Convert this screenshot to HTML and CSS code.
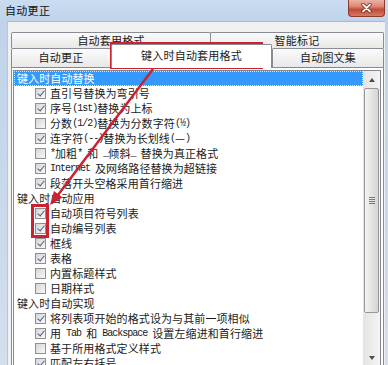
FILE: index.html
```html
<!DOCTYPE html>
<html>
<head>
    <meta charset="UTF-8">
    <title>自动更正</title>
    <link rel="stylesheet" href="styles.css">
</head>
<body>
    <div class="window">
        <div class="titlebar">
            <span class="title">自动更正</span>
            <span class="close">
                <svg width="11" height="10" viewBox="0 0 11 10">
                    <path d="M2 1.5 L9 8.5 M9 1.5 L2 8.5" stroke="#5a1d15" stroke-width="3.2" stroke-linecap="round"/>
                    <path d="M2 1.5 L9 8.5 M9 1.5 L2 8.5" stroke="#ffffff" stroke-width="1.8" stroke-linecap="round"/>
                </svg>
            </span>
        </div>

        <div class="client">
            <div class="tabs">
                <div class="tabrow back">
                    <div class="tab t-fmt">自动套用格式</div>
                    <div class="tab t-smart">智能标记</div>
                </div>
                <div class="tabrow front">
                    <div class="tab t-ac">自动更正</div>
                    <div class="tab active">键入时自动套用格式</div>
                    <div class="tab t-at">自动图文集</div>
                </div>
            </div>

            <div class="pane">
                <div class="listbox">
                    <div class="items">
                        <div class="row head sel">键入时自动替换</div>
                        <div class="row"><span class="cb on"></span>直引号替换为弯引号</div>
                        <div class="row"><span class="cb on"></span>序号<span class="en">(1st)</span>替换为上标</div>
                        <div class="row"><span class="cb"></span>分数<span class="en">(1/2)</span>替换为分数字符<span class="en">(½)</span></div>
                        <div class="row"><span class="cb on"></span>连字符<span class="en">(--)</span>替换为长划线<span class="en">(</span>—<span class="en">)</span></div>
                        <div class="row"><span class="cb"></span><span class="en">*</span>加粗<span class="en">* </span>和<span class="en"> _</span>倾斜<span class="en">_ </span>替换为真正格式</div>
                        <div class="row"><span class="cb on"></span><span class="en">Internet </span>及网络路径替换为超链接</div>
                        <div class="row"><span class="cb on"></span>段落开头空格采用首行缩进</div>
                        <div class="row head">键入时自动应用</div>
                        <div class="row"><span class="cb on"></span>自动项目符号列表</div>
                        <div class="row"><span class="cb on"></span>自动编号列表</div>
                        <div class="row"><span class="cb on"></span>框线</div>
                        <div class="row"><span class="cb on"></span>表格</div>
                        <div class="row"><span class="cb"></span>内置标题样式</div>
                        <div class="row"><span class="cb"></span>日期样式</div>
                        <div class="row head">键入时自动实现</div>
                        <div class="row"><span class="cb on"></span>将列表项开始的格式设为与其前一项相似</div>
                        <div class="row"><span class="cb on"></span>用<span class="en"> Tab </span>和<span class="en"> Backspace </span>设置左缩进和首行缩进</div>
                        <div class="row"><span class="cb"></span>基于所用格式定义样式</div>
                        <div class="row"><span class="cb on"></span>匹配左右括号</div>
                    </div>
                    <div class="scrollbar">
                        <div class="sb-btn"><span class="arrow-up"></span></div>
                        <div class="thumb"><span class="grip"></span></div>
                        <div class="track"></div>
                        <div class="sb-btn"><span class="arrow-down"></span></div>
                    </div>
                </div>
            </div>
        </div>

        <!-- red annotation marks drawn over the dialog -->
        <svg class="annot" width="388" height="365" viewBox="0 0 388 365">
            <rect x="111.5" y="43.5" width="150" height="24" fill="none" stroke="#cc2230" stroke-width="3"/>
            <rect x="32.5" y="205.5" width="15" height="31" fill="none" stroke="#cc2230" stroke-width="3"/>
            <line x1="153" y1="69" x2="58" y2="195" stroke="#cc2230" stroke-width="2.5"/>
            <polygon points="50,205 62.5,197.5 54,191" fill="#cc2230"/>
        </svg>
    </div>
</body>
</html>
```

FILE: styles.css
```css
/* Windows 7 style dialog */
:root {
    --frame: #c4d7ee;
    --client: #f0f0f0;
    --tab-border: #898c95;
    --list-border: #828790;
    --highlight: #3399ff;
    --text: #1a1a1a;
}

* {
    margin: 0;
    padding: 0;
    box-sizing: border-box;
}

body {
    width: 388px;
    height: 365px;
    overflow: hidden;
    font-family: "Noto Sans CJK SC", "Liberation Sans", sans-serif;
    font-size: 11px;
    color: var(--text);
}

.window {
    position: relative;
    width: 388px;
    height: 365px;
    overflow: hidden;
    background: linear-gradient(#cadcf1, #bfd3ea 22px, #d2dfed);
}

.titlebar {
    height: 21px;
    display: flex;
    justify-content: space-between;
}

.title {
    padding: 3px 0 0 5px;
    line-height: 15px;
    letter-spacing: 0.3px;
    color: #111;
}

.close {
    width: 37px;
    height: 17px;
    margin-right: 3px;
    border: 1px solid #8a3a2e;
    border-top: none;
    border-radius: 0 0 4px 4px;
    background: linear-gradient(#ebb3a6, #dc8672 40%, #c54a34 60%, #d67a63);
    display: flex;
    align-items: center;
    justify-content: center;
}

.client {
    margin-left: 7px;
    width: 378px;
    height: 344px;
    background: var(--client);
    border-top: 1px solid #aab8c8;
    border-left: 1px solid #b8c6d6;
    padding: 10px 0 0 3px;
}

.tabs {
    width: 373px;
}

.tabrow {
    display: flex;
}

.back {
    height: 16px;
}

.front {
    height: 19px;
}

.tab {
    border: 1px solid var(--tab-border);
    border-bottom: none;
    border-radius: 2px 2px 0 0;
    background: linear-gradient(#fbfbfb, #e8e8e8);
    text-align: center;
    letter-spacing: 0.2px;
    white-space: nowrap;
}

.back .tab {
    height: 16px;
    line-height: 14px;
}

.front .tab {
    height: 19px;
    line-height: 17px;
}

.t-fmt {
    width: 200px;
}

.t-smart {
    flex: 1;
    margin-left: -1px;
}

.t-ac {
    width: 100px;
}

.front .active {
    position: relative;
    z-index: 1;
    width: 161px;
    height: 24px;
    margin-top: -4px;
    line-height: 20px;
    background: #fff;
}

.t-at {
    flex: 1;
}

.pane {
    width: 373px;
    height: 300px;
    background: #fff;
    border: 1px solid var(--tab-border);
    padding: 2px 0 0 1px;
}

.listbox {
    width: 368px;
    height: 297px;
    border: 1px solid var(--list-border);
    display: flex;
    background: #fff;
}

.items {
    flex: 1;
    overflow: hidden;
}

.row {
    height: 15px;
    line-height: 15px;
    padding-left: 21px;
    display: flex;
    align-items: center;
    white-space: nowrap;
    letter-spacing: 0.1px;
}

.row.head {
    padding-left: 3px;
}

.sel {
    background: var(--highlight);
    color: #fff;
    outline: 1px dotted #cfe4ff;
    outline-offset: -1px;
}

.en {
    font-family: "Liberation Mono", monospace;
    font-size: 10px;
    white-space: pre;
    letter-spacing: -1px;
}

.cb {
    position: relative;
    flex: none;
    width: 11px;
    height: 11px;
    margin-right: 4px;
    border: 1px solid #8e8f8f;
    background: linear-gradient(135deg, #d6d6d6, #f8f8f8);
}

.cb.on::after {
    content: "";
    position: absolute;
    left: 3px;
    top: 0;
    width: 3px;
    height: 6px;
    border: solid #4f6080;
    border-width: 0 1.3px 1.3px 0;
    transform: rotate(40deg);
}

.scrollbar {
    width: 17px;
    display: flex;
    flex-direction: column;
    background: linear-gradient(90deg, #e4e4e4, #f4f4f4);
}

.sb-btn {
    height: 17px;
    display: flex;
    align-items: center;
    justify-content: center;
}

.arrow-up {
    border-left: 3px solid transparent;
    border-right: 3px solid transparent;
    border-bottom: 4px solid #4d4d4d;
}

.arrow-down {
    border-left: 3px solid transparent;
    border-right: 3px solid transparent;
    border-top: 4px solid #4d4d4d;
}

.thumb {
    height: 225px;
    margin: 0 1px;
    border: 1px solid #979797;
    border-radius: 2px;
    background: linear-gradient(90deg, #f4f4f4, #e4e4e4 50%, #d4d4d4);
    display: flex;
    align-items: center;
    justify-content: center;
}

.grip {
    width: 6px;
    height: 7px;
    background: repeating-linear-gradient(#7a7a7a 0 1px, transparent 1px 2px);
}

.track {
    flex: 1;
}

.annot {
    position: absolute;
    top: 0;
    left: 0;
    pointer-events: none;
}
```
